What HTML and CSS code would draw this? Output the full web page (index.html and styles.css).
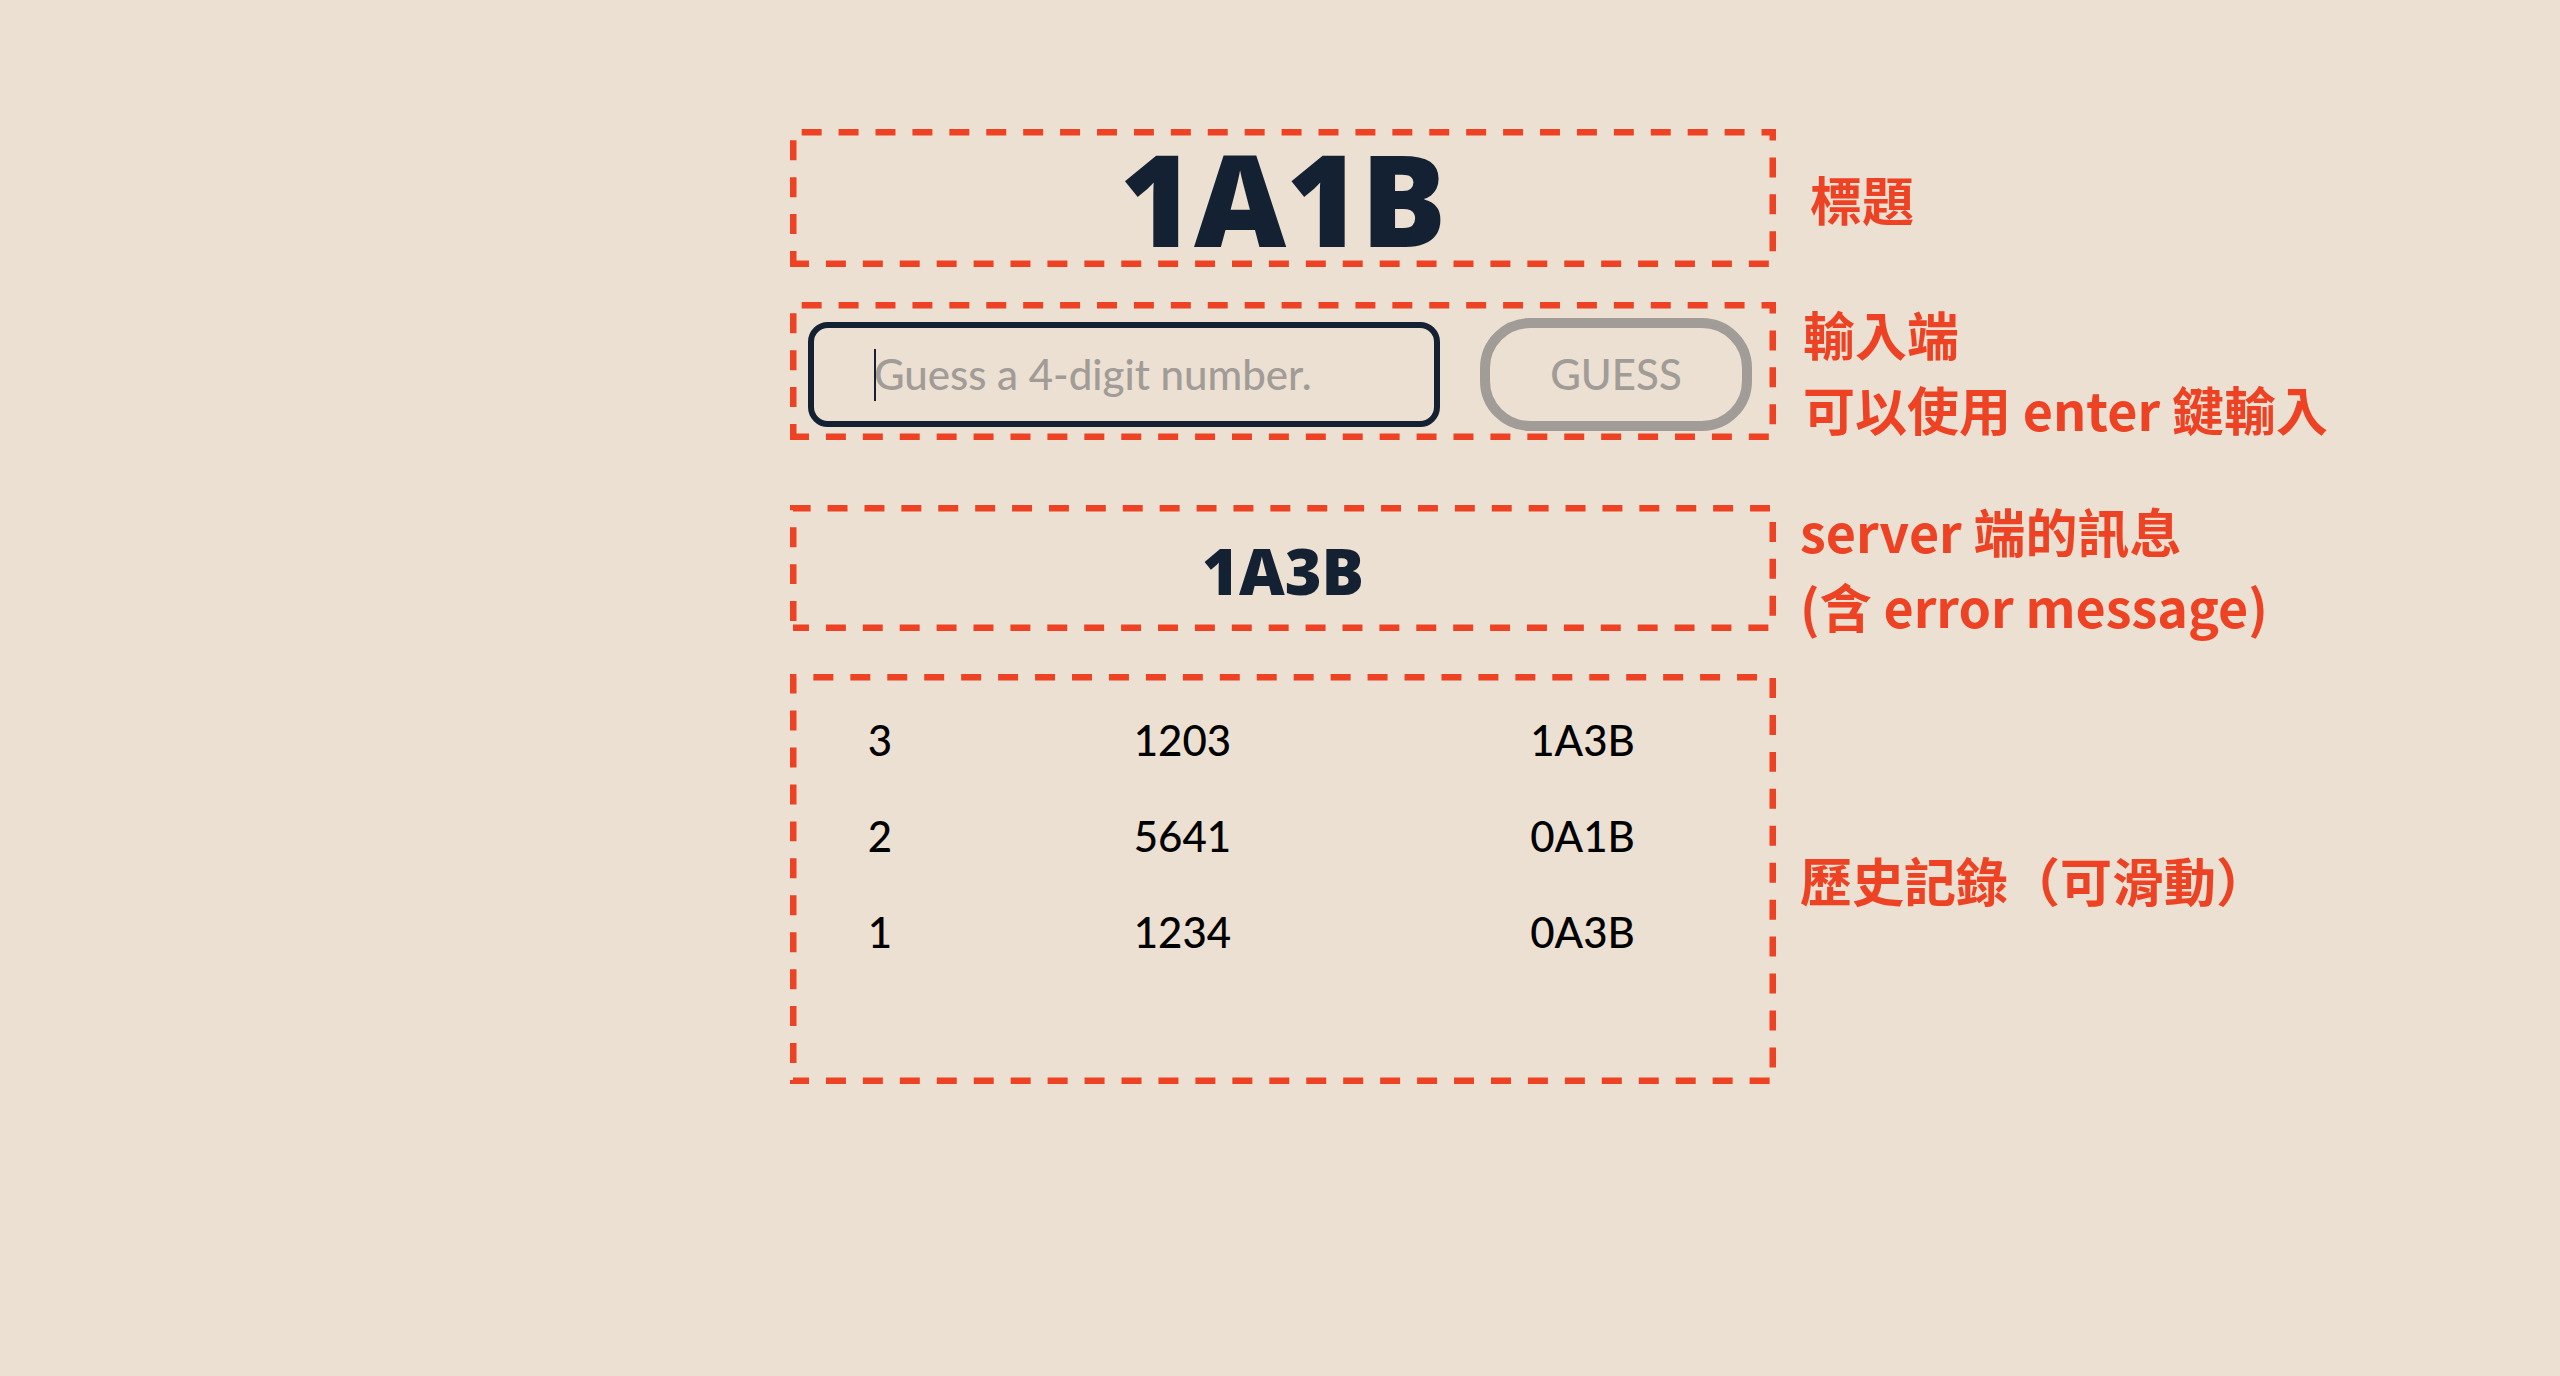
FILE: index.html
```html
<!DOCTYPE html>
<html lang="zh-Hant">
<head>
<meta charset="utf-8">
<meta name="viewport" content="width=device-width, initial-scale=1">
<title>1A1B</title>
<link rel="stylesheet" href="styles.css">
</head>
<body>
<main class="page">
  <section class="row row-title">
    <div class="frame frame-title">
      <svg class="outline" aria-hidden="true"><rect class="dash" pathLength="2229"/></svg>
      <h1 class="title">1A1B</h1>
    </div>
    <p class="note note-title">標題</p>
  </section>

  <section class="row row-guess">
    <form class="frame frame-guess">
      <svg class="outline" aria-hidden="true"><rect class="dash" pathLength="2229"/></svg>
      <div class="field">
        <input class="guess-input" type="text" aria-label="Guess" placeholder="Guess a 4-digit number.">
        <span class="caret"></span>
      </div>
      <button class="guess-button" type="button">GUESS</button>
    </form>
    <p class="note note-guess">輸入端<br>可以使用 enter 鍵輸入</p>
  </section>

  <section class="row row-message">
    <div class="frame frame-message">
      <svg class="outline" aria-hidden="true"><rect class="dash" pathLength="2206"/></svg>
      <p class="message">1A3B</p>
    </div>
    <p class="note">server 端的訊息<br>(含 error message)</p>
  </section>

  <section class="row row-history">
    <div class="frame frame-history">
      <svg class="outline" aria-hidden="true"><rect class="dash" pathLength="2772"/></svg>
      <div class="scroller">
        <table class="history">
          <colgroup><col class="col-turn"><col class="col-guess"><col class="col-result"></colgroup>
          <tbody>
            <tr><td>3</td><td>1203</td><td>1A3B</td></tr>
            <tr><td>2</td><td>5641</td><td>0A1B</td></tr>
            <tr><td>1</td><td>1234</td><td>0A3B</td></tr>
          </tbody>
        </table>
      </div>
    </div>
    <p class="note">歷史記錄（可滑動）</p>
  </section>
</main>
</body>
</html>
```
FILE: styles.css
```css
:root {
  --paper: #ece0d2;
  --ink: #142132;
  --muted: #a19c97;
  --mark: #ed4223;
}

* {
  box-sizing: border-box;
}

body {
  margin: 0;
  background: var(--paper);
  color: var(--ink);
  font-family: Lato, "Noto Sans CJK TC", sans-serif;
}

h1,
p {
  margin: 0;
}

.page {
  padding: 129px 0 64px 6px;
}

.row {
  display: grid;
  grid-template-columns: minmax(0, 1fr) minmax(0, 986px) minmax(0, 1fr);
  align-items: center;
}

.row-guess {
  margin-top: 29px;
}

.row-message {
  margin-top: 47px;
}

.row-history {
  margin-top: 31px;
}

/* Dashed section outline, laid over the frame */
.frame {
  position: relative;
  grid-column: 2;
  display: flex;
  align-items: center;
  justify-content: center;
}

.outline {
  position: absolute;
  inset: 0;
  width: 100%;
  height: 100%;
  pointer-events: none;
  transform: scaleY(-1);
}

.dash {
  x: 3px;
  y: 3px;
  width: calc(100% - 6px);
  height: calc(100% - 6px);
  fill: none;
  stroke: var(--mark);
  stroke-width: 7px;
  stroke-dasharray: 20 17;
  stroke-dashoffset: 4px;
}

.frame-title,
.frame-guess {
  min-height: 138px;
}

.frame-message {
  min-height: 126px;
  padding-top: 6px;
}

.title,
.message {
  font-family: "Open Sans", Lato, sans-serif;
  font-weight: 800;
}

.title {
  font-size: 127px;
  line-height: 138px;
}

.frame-guess {
  gap: 40px;
  padding: 6px 24px 0 18px;
}

.field {
  position: relative;
  flex: 1;
  min-width: 0;
}

.guess-input {
  display: block;
  width: 100%;
  height: 105px;
  padding: 0 40px 0 60px;
  border: 6px solid var(--ink);
  border-radius: 20px;
  background: transparent;
  color: var(--ink);
  font: 500 42px Lato, sans-serif;
  outline: none;
}

.guess-input::placeholder {
  color: var(--muted);
  opacity: 1;
}

.caret {
  position: absolute;
  left: 66px;
  top: 27px;
  width: 2px;
  height: 52px;
  background: var(--ink);
}

.guess-button {
  width: 272px;
  height: 113px;
  padding: 0;
  border: 10px solid var(--muted);
  border-radius: 50px;
  background: transparent;
  color: var(--muted);
  font: 500 42px Lato, sans-serif;
}

.message {
  font-size: 63px;
  line-height: 80px;
}

.scroller {
  width: 100%;
  height: 410px;
  padding: 18px 8px 0 2px;
  overflow-y: auto;
}

.history {
  width: 100%;
  table-layout: fixed;
  border-collapse: collapse;
  color: #000;
  font-size: 42px;
  font-weight: 500;
  line-height: 96px;
  text-align: center;
}

.history td {
  padding: 0;
}

.col-turn {
  width: 18%;
}

.col-guess {
  width: 44%;
}

.col-result {
  width: 38%;
}

/* Notes beside each section */
.note {
  padding-left: 24px;
  color: var(--mark);
  font-family: "Noto Sans CJK TC", sans-serif;
  font-size: 52px;
  font-weight: 700;
  line-height: 75px;
  white-space: nowrap;
}

.note-title {
  padding-left: 34px;
}

.note-guess {
  padding-left: 27px;
}
```
